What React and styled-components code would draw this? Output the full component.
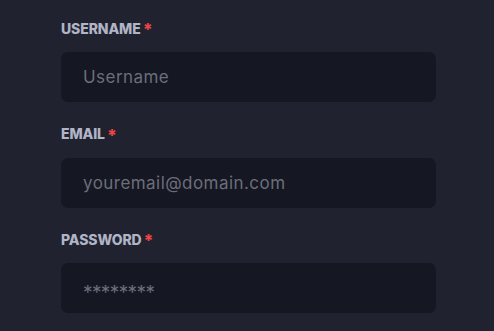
import React from "react";
import styled, { createGlobalStyle } from "styled-components";

const Global = createGlobalStyle`
  html, body { margin: 0; padding: 0; background: #20232f; }
  body { font-family: Inter, "Noto Sans", sans-serif; }
`;

const Page = styled.div`
  width: 494px;
  height: 331px;
  background: #20232f;
  box-sizing: border-box;
  padding: 19px 58px 0 61px;
  overflow: hidden;
`;

const Form = styled.form`
  display: flex;
  flex-direction: column;
  gap: 22.5px;
`;

const Field = styled.div`
  display: flex;
  flex-direction: column;
  gap: 15px;
`;

const Label = styled.label`
  display: flex;
  align-items: center;
  height: 18px;
  font-size: 14px;
  font-weight: 800;
  color: #b1b4c6;
  letter-spacing: -0.1px;
`;

const Required = styled.span`
  color: #ef4444;
  margin-left: 2px;
  font-size: 17px;
  font-weight: 800;
  line-height: 1;
  padding-top: 5px;
`;

const Input = styled.input`
  box-sizing: border-box;
  width: 375px;
  height: 50px;
  border: none;
  outline: none;
  border-radius: 7px;
  background: #151722;
  padding: ${(p) => (p.$masked ? "9px 22px 0" : "0 22px")};
  font-family: Inter, "Noto Sans", sans-serif;
  font-size: ${(p) => (p.$masked ? "19px" : "17px")};
  letter-spacing: ${(p) => (p.$masked ? "-0.6px" : "0.45px")};
  color: #d0d2dc;
  &::placeholder {
    color: #6c6e7b;
  }
`;

const fields = [
  { id: "username", label: "USERNAME", placeholder: "Username", type: "text" },
  { id: "email", label: "EMAIL", placeholder: "youremail@domain.com", type: "email" },
  { id: "password", label: "PASSWORD", placeholder: "********", type: "password", masked: true },
];

export default function App() {
  return (
    <Page>
      <Global />
      <Form onSubmit={(e) => e.preventDefault()}>
        {fields.map((f) => (
          <Field key={f.id}>
            <Label htmlFor={f.id}>
              {f.label}
              <Required>*</Required>
            </Label>
            <Input id={f.id} type={f.type} placeholder={f.placeholder} $masked={f.masked} />
          </Field>
        ))}
      </Form>
    </Page>
  );
}
